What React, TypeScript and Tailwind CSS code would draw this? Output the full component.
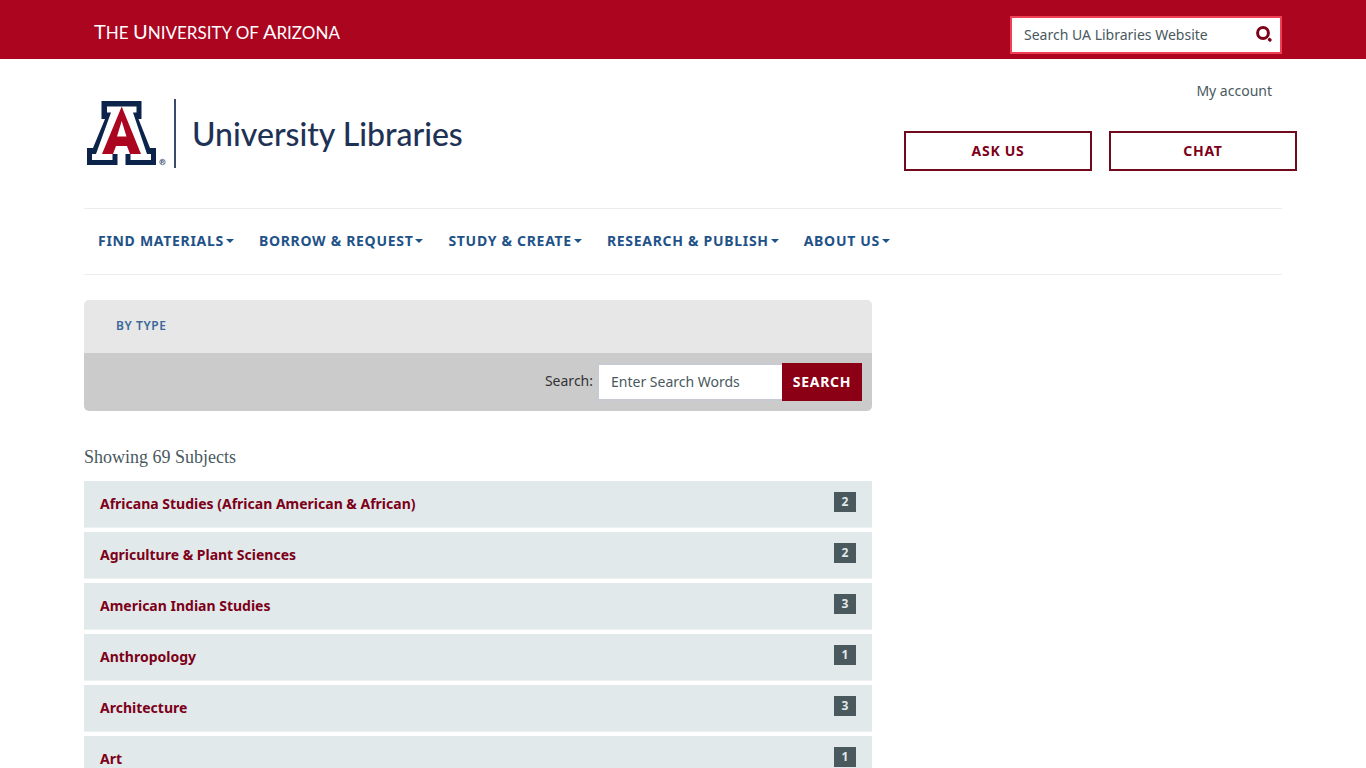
import React from 'react';

interface Subject {
  name: string;
  count: number;
}

const NAV_ITEMS = ['Find Materials', 'Borrow & Request', 'Study & Create', 'Research & Publish', 'About Us'];

const SUBJECTS: Subject[] = [
  { name: 'Africana Studies (African American & African)', count: 2 },
  { name: 'Agriculture & Plant Sciences', count: 2 },
  { name: 'American Indian Studies', count: 3 },
  { name: 'Anthropology', count: 1 },
  { name: 'Architecture', count: 3 },
  { name: 'Art', count: 1 },
];

const BlockA: React.FC = () => (
  <svg viewBox="-3 0 83 67" className="h-[67px] w-[83px]" aria-hidden="true">
    <path fill="#0c234b" d="M14.500 1H54.500V19H51.500L63 48H69V65H38.500V54H30.500V65H0V48H6L18 19H14.500Z" />
    <path fill="#fff" d="M20 6.500H49.500V12.500H46L60 54H64V60H43.500V54H25.500V60H5V54H9L24 12.500H20Z" />
    <path fill="#ab0520" fillRule="evenodd" d="M34.700 6.500L54 54H43L40 46H29L26 54H15ZM34.700 21L30 36.500H39.500Z" />
    <circle cx="75.500" cy="62" r="2.700" fill="none" stroke="#0c234b" strokeWidth="0.6" />
    <path fill="none" stroke="#0c234b" strokeWidth="0.6" d="M74.500 63.600V60.500H76A0.800 0.800 0 0 1 76 62H74.500M75.700 62L76.700 63.600" />
  </svg>
);

const SearchIcon: React.FC = () => (
  <svg viewBox="0 0 16 16" className="size-4" fill="none" stroke="#7d0019" aria-hidden="true">
    <circle cx="7" cy="7" r="5.400" strokeWidth="3" />
    <path d="M13.300 13.300L14 14" strokeWidth="3.200" strokeLinecap="round" />
    <path d="M10.800 13.600L13.600 10.800" stroke="#fff" strokeWidth="0.8" />
  </svg>
);

const App: React.FC = () => {
  return (
    <div className="min-h-screen bg-white font-['Noto_Sans',sans-serif] text-sm text-[#49595e]">
      <header>
        <div className="bg-[#ab0520]">
          <div className="mx-auto flex max-w-[1198px] items-start justify-between">
            <a href="#" className="px-2.5 pt-[17px] font-['Lato',sans-serif] text-[17px] leading-7 text-white">
              <span className="text-xl">T</span>HE <span className="text-xl">U</span>NIVERSITY OF <span className="text-xl">A</span>RIZONA
            </a>
            <form className="mt-4 mb-[5px] flex h-[38px] w-[272px] items-center border-2 border-[#ef4056] bg-white">
              <input
                type="text"
                aria-label="Search UA Libraries Website"
                placeholder="Search UA Libraries Website"
                className="min-w-0 grow px-3 text-sm outline-none placeholder:text-[#49595e]"
              />
              <button type="button" aria-label="Search" className="px-2 pb-0.5">
                <SearchIcon />
              </button>
            </form>
          </div>
        </div>

        <div className="mx-auto flex max-w-[1198px] justify-between">
          <a href="#" className="mt-10 flex h-[69px] items-center">
            <BlockA />
            <span className="ml-[7px] h-full w-0.5 bg-[#3a4b6c]"></span>
            <span className="ml-4 font-['Lato',sans-serif] text-[32px] font-medium text-[#1e3256]">University Libraries</span>
          </a>
          <div className="-mr-[15px] flex flex-col items-end">
            <a href="#" className="mt-[22px] mr-[25px] leading-5">My account</a>
            <div className="mt-[30px] mb-[37px] flex gap-[17px] font-bold tracking-wider text-[#7d0019]">
              <button type="button" className="h-10 w-[188px] border-2 border-[#700b1e]">ASK US</button>
              <button type="button" className="h-10 w-[188px] border-2 border-[#700b1e]">CHAT</button>
            </div>
          </div>
        </div>

        <nav className="mx-auto flex h-[67px] max-w-[1198px] items-center gap-[25px] border-y border-[#ededed] px-3.5 pb-0.5">
          {NAV_ITEMS.map((item) => (
            <a key={item} href="#" className="flex items-center gap-0.5 font-bold tracking-wider text-[#1e5288] uppercase">
              {item}
              <span className="border-x-4 border-t-4 border-x-transparent border-t-[#1e5288]"></span>
            </a>
          ))}
        </nav>
      </header>

      <main className="mx-auto max-w-[1198px] pt-[25px]">
        <div className="max-w-[788px]">
          <div className="overflow-hidden rounded-[5px]">
            <div className="flex h-[53px] items-center bg-[#e7e7e7] px-8 pb-0.5">
              <a href="#" className="text-xs font-semibold tracking-wider text-[#3b6899]">BY TYPE</a>
            </div>
            <form className="flex h-[58px] items-center justify-end bg-[#cbcbcb] pr-2.5">
              <label htmlFor="subject-search" className="mr-1 pb-0.5 text-[#333]">Search:</label>
              <input
                id="subject-search"
                type="text"
                placeholder="Enter Search Words"
                className="h-[38px] w-[185px] border-2 border-r-0 border-[#c8cad3] bg-white px-3 pb-0.5 outline-none placeholder:text-[#49595e]"
              />
              <button type="button" className="h-[38px] w-20 bg-[#8b0015] font-bold tracking-wider text-white">SEARCH</button>
            </form>
          </div>

          <p className="mt-9 font-['Liberation_Serif',serif] text-lg leading-5">Showing 69 Subjects</p>

          <ul className="mt-3.5 flex flex-col gap-1">
            {SUBJECTS.map((subject) => (
              <li key={subject.name} className="flex h-[47px] justify-between border-b border-[#edf1f2] bg-[#e2e9eb] px-4">
                <a href="#" className="mt-[13px] leading-5 font-bold text-[#7d0019]">{subject.name}</a>
                <span className="mt-[11px] flex h-5 w-[22px] items-center justify-center bg-[#49595e] text-xs font-bold text-[#e2e9eb]">
                  {subject.count}
                </span>
              </li>
            ))}
          </ul>
        </div>
      </main>
    </div>
  );
};

export default App;
